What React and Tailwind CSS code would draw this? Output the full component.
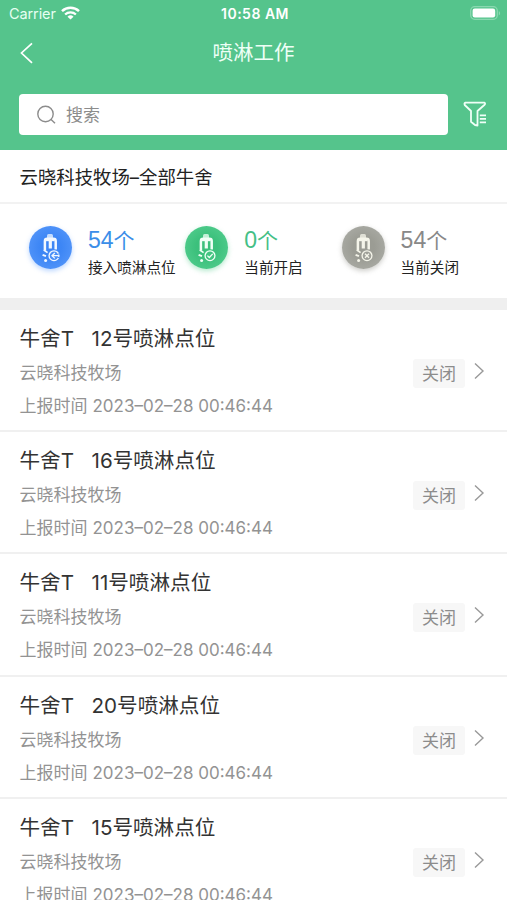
const STATS = [
  {
    key: 'total',
    count: 54,
    label: '接入喷淋点位',
    text: 'text-[#3b8ee8]',
    badge: 'bg-[radial-gradient(circle,#3d86f5_35%,#5b9bfb_100%)] shadow-[0_2px_5px_rgba(80,150,255,0.4)]',
    ink: '#f2f8ff',
    hole: '#4a8ff7',
  },
  {
    key: 'open',
    count: 0,
    label: '当前开启',
    text: 'text-[#45bf86]',
    badge: 'bg-[radial-gradient(circle,#3cc07c_35%,#57d192_100%)] shadow-[0_2px_5px_rgba(70,200,130,0.4)]',
    ink: '#f0fff6',
    hole: '#43c481',
  },
  {
    key: 'closed',
    count: 54,
    label: '当前关闭',
    text: 'text-[#888888]',
    badge: 'bg-[radial-gradient(circle,#9b9c94_35%,#b0b1ab_100%)] shadow-[0_2px_5px_rgba(130,130,120,0.4)]',
    ink: '#f5f5ea',
    hole: '#9fa099',
  },
];

const POINTS = ['12', '16', '11', '20', '15'];

function StatusBar() {
  return (
    <div className="grid h-7 grid-cols-3 items-center pl-[9px] pr-[6px] text-white">
      <div className="flex items-center gap-[5px]">
        <span className="text-[14.5px] tracking-[-0.1px] text-[#e6fff2]">Carrier</span>
        <svg className="-mt-[2px]" width="19" height="14" viewBox="0 0 19 14" fill="none" stroke="currentColor">
          <path d="M1 5.2a12.4 12.4 0 0 1 17 0" strokeWidth="2.5" />
          <path d="M4.1 8.5a7.8 7.8 0 0 1 10.8 0" strokeWidth="2.3" />
          <path d="M9.5 13.6 6.5 10.7a4.4 4.4 0 0 1 6 0Z" fill="currentColor" stroke="none" />
        </svg>
      </div>
      <span className="-mt-[2px] text-center text-[14px] font-semibold tracking-[0.5px]">10:58 AM</span>
      <svg className="-mt-[2px] justify-self-end" width="31" height="14" viewBox="0 0 31 14">
        <rect x="0.7" y="0.7" width="26.6" height="12.6" rx="4" fill="none" stroke="#8ad8b0" strokeWidth="1.3" />
        <rect x="2.6" y="2.5" width="22.6" height="9" rx="2.2" fill="#fff" />
        <path d="M28.8 5v4.4c1.8-.8 1.8-3.6 0-4.4Z" fill="#8ad8b0" />
      </svg>
    </div>
  );
}

function SprinklerIcon({ type, ink, hole }) {
  return (
    <svg width="44" height="44" viewBox="0 0 44 44" fill="none">
      <path d="M18 12V9.5q0-1.5 1.5-1.5h3q1.5 0 1.5 1.5V12Z" fill={ink} opacity="0.75" />
      <path d="M15.9 24.5V15q0-2.2 2.2-2.2h6.4q2.2 0 2.2 2.2v8.5" stroke={ink} strokeWidth="2.5" />
      <path d="M17 12.5h8.6v2.7H17Z" fill={ink} />
      <path d="M21.3 14v8.5" stroke={ink} strokeWidth="3.2" />
      <path d="M14.8 24 18.6 26.6" stroke={ink} strokeWidth="1.6" />
      <circle cx="25" cy="29.7" r="6.2" fill={hole} />
      <circle cx="25" cy="29.7" r="4.9" stroke={ink} strokeWidth="1.3" />
      {type === 'total' && (
        <>
          <path d="m25.8 27-2.8 2.7 2.8 2.7M23.2 29.7h6.7" stroke={ink} strokeWidth="1.3" />
          <path d="M29.9 27.4v1.2M29.9 30.9v1.2" stroke={hole} strokeWidth="1.8" />
        </>
      )}
      {type === 'open' && <path d="m22.4 29.6 1.9 1.9 3.4-3.6" stroke={ink} strokeWidth="1.3" />}
      {type === 'closed' && <path d="m23 27.7 4 4m0-4-4 4" stroke={ink} strokeWidth="1.3" />}
      <path d="m13.6 28.8 3.4 1.4" stroke={ink} strokeWidth="1.8" />
      <circle cx="16.6" cy="34.4" r="1.5" fill={ink} />
    </svg>
  );
}

function Header() {
  return (
    <header className="h-[150px] bg-[#55c48c]">
      <StatusBar />
      <div className="grid h-[50px] grid-cols-[60px_1fr_60px] items-center text-white">
        <svg className="ml-[18px]" width="16" height="24" viewBox="0 0 16 24" fill="none" stroke="currentColor" strokeWidth="1.7">
          <path d="M14 2.3 3.5 12 14 21.8" />
        </svg>
        <h1 className="text-center text-[20.5px] leading-[50px] text-[#eefff6]">喷淋工作</h1>
      </div>
      <div className="mt-4 flex items-center pl-[19px]">
        <div className="flex h-[41px] w-[429px] items-center gap-[9px] rounded-[4px] bg-white pl-[18px] text-[#8c8c8c]">
          <svg width="20" height="20" viewBox="0 0 20 20" fill="none" stroke="currentColor" strokeWidth="1.4">
            <circle cx="8.5" cy="9" r="7.7" />
            <path d="m13.8 14.2 4.2 4.1" />
          </svg>
          <span className="pt-[2px] text-[17px]">搜索</span>
        </div>
        <svg className="ml-[14px]" width="26" height="28" viewBox="0 0 26 28" fill="none" stroke="#f0fff7" strokeWidth="1.8" strokeLinejoin="round">
          <path d="M3.5 1.6h19q1.3 1-.2 2.4L15.5 10v14.5l-2.5-.5-4-3.2V10L2.7 4Q2 2.2 3.5 1.6Z" />
          <path d="M17.8 14.3h6.2M17.8 17.8h6.2M17.8 21.3h6.2" />
        </svg>
      </div>
    </header>
  );
}

function Stat({ item }) {
  return (
    <div className="flex">
      <div className={`mt-[22px] size-[43px] shrink-0 rounded-full ${item.badge}`}>
        <SprinklerIcon type={item.key} ink={item.ink} hole={item.hole} />
      </div>
      <div className="ml-4 pt-[21px] whitespace-nowrap">
        <p className={`font-['Liberation_Sans','Noto_Sans_CJK_SC',sans-serif] text-[23px] leading-[30px] ${item.text}`}>
          {item.count}
          <span className="text-[21px]">个</span>
        </p>
        <p className="text-[14.6px] leading-[24px] text-[#222]">{item.label}</p>
      </div>
    </div>
  );
}

function PointRow({ no }) {
  return (
    <li className="flex h-[122.2px] justify-between border-b-2 border-[#f0f0f0] pl-[19.5px] pr-[22px]">
      <div className="pt-[13px] whitespace-nowrap">
        <h2 className="flex text-[20.6px] leading-[32px] text-[#333]">
          <span className="w-[72px]">牛舍T</span>
          <span>{no}号喷淋点位</span>
        </h2>
        <p className="mt-[2px] text-[17px] leading-[32px] text-[#939393]">云晓科技牧场</p>
        <p className="mt-[1px] flex gap-[5px] text-[17px] leading-[32px] text-[#939393]">
          <span>上报时间</span>
          <span>2023–02–28 00:46:44</span>
        </p>
      </div>
      <div className="flex items-start pt-[49px]">
        <span className="h-[29px] w-[52px] rounded-[3px] bg-[#f7f7f7] pt-px text-center text-[17px] leading-[29px] text-[#8c8c8c]">
          关闭
        </span>
        <svg className="mt-[3px] ml-[8px]" width="12" height="18" viewBox="0 0 12 18" fill="none" stroke="#999" strokeWidth="1.4">
          <path d="m2 1.5 8 7.5-8 7.5" />
        </svg>
      </div>
    </li>
  );
}

export default function App() {
  return (
    <div className="h-[900px] w-[507px] overflow-hidden bg-white font-['Inter','Noto_Sans_CJK_SC',sans-serif]">
      <Header />
      <div className="flex h-[54px] items-center border-b-2 border-[#f2f2f2] pt-[3px] pl-[19.5px] text-[18.4px] text-[#222]">
        云晓科技牧场–全部牛舍
      </div>
      <section className="grid h-[94px] grid-cols-[156.3px_156.3px_1fr] pl-[29px]">
        {STATS.map((item) => (
          <Stat key={item.key} item={item} />
        ))}
      </section>
      <div className="h-3 bg-[#efefef]" />
      <ul>
        {POINTS.map((no) => (
          <PointRow key={no} no={no} />
        ))}
      </ul>
    </div>
  );
}
